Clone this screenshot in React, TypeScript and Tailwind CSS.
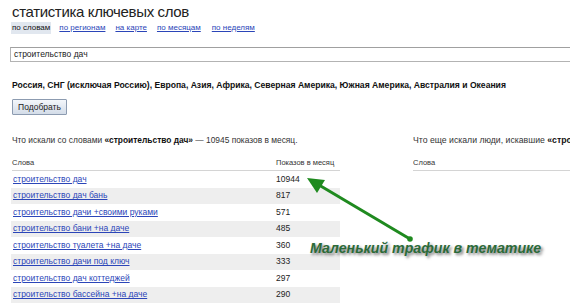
import React from "react";

const rows: [string, string][] = [
  ["строительство дач", "10944"],
  ["строительство дач бань", "817"],
  ["строительство дачи +своими руками", "571"],
  ["строительство бани +на даче", "485"],
  ["строительство туалета +на даче", "360"],
  ["строительство дачи под ключ", "333"],
  ["строительство дач коттеджей", "297"],
  ["строительство бассейна +на даче", "290"],
];

export default function App() {
  return (
    <div className="relative w-[570px] h-[305px] overflow-hidden bg-white text-[#333] font-['Liberation_Sans',Arial,sans-serif]">
      <div className="pl-[12px]">
        <div className="mt-[2px] h-[20px] leading-[20px] text-[15px] tracking-[-0.35px] text-[#222]">статистика ключевых слов</div>
        <div className="flex items-center h-[12px] text-[8px] leading-[12px]">
          <span className="-ml-[1px] px-[1px] bg-[#e1e7ef] text-[#111]">по словам</span>
          <a className="ml-[8px] text-[#2b45b8] underline">по регионам</a>
          <a className="ml-[10px] text-[#2b45b8] underline">на карте</a>
          <a className="ml-[10px] text-[#2b45b8] underline">по месяцам</a>
          <a className="ml-[11px] text-[#2b45b8] underline">по неделям</a>
        </div>
        <div className="mt-[13px] -ml-[2px] w-[580px] h-[15px] border border-[#b3b3b3] border-t-[#a0a0a0] flex items-center pl-[3px] text-[8.5px] text-[#222]">
          строительство дач
        </div>
        <div className="mt-[17px] h-[12px] leading-[12px] text-[8.6px] font-bold text-[#111] whitespace-nowrap">
          Россия, СНГ (исключая Россию), Европа, Азия, Африка, Северная Америка, Южная Америка, Австралия и Океания
        </div>
        <div className="mt-[8px] w-[55px] h-[16px] border border-[#8c9bb0] rounded-[1px] bg-gradient-to-b from-[#f4f7fb] to-[#d3dce8] flex items-center justify-center text-[8.5px] text-[#222]">
          Подобрать
        </div>
        <div className="mt-[19px] flex">
          <div className="w-[329px] -ml-[1px]">
            <div className="h-[12px] leading-[12px] text-[8.4px] pl-[1px] whitespace-nowrap">
              Что искали со словами <b className="text-[#111]">«строительство дач»</b> — 10945 показов в месяц.
            </div>
            <div className="mt-[10px] h-[15px] border-b border-[#d4d4d4] flex items-center text-[7.5px] text-[#333] ml-[1px]">
              <span className="w-[264px]">Слова</span>
              <span>Показов в месяц</span>
            </div>
            {rows.map(([w, n], i) => (
              <div
                key={w}
                className={`h-[16.5px] flex items-center text-[8.5px] ${i % 2 === 1 ? "bg-[#eeeeee]" : ""}`}
              >
                <a className="w-[265px] pl-[2px] text-[#2b45b8] underline">{w}</a>
                <span className="text-[#222]">{n}</span>
              </div>
            ))}
          </div>
          <div className="ml-[73px] flex-1 overflow-hidden">
            <div className="h-[12px] leading-[12px] text-[8.7px] whitespace-nowrap">
              Что еще искали люди, искавшие <b className="text-[#111]">«строительство дач»</b>
            </div>
            <div className="mt-[10px] h-[15px] border-b border-[#d4d4d4] flex items-center text-[7.5px] w-[200px]">
              Слова
            </div>
          </div>
        </div>
      </div>

      <svg className="absolute left-0 top-0" width="570" height="305" viewBox="0 0 570 305">
        <line x1="410" y1="239" x2="319" y2="185" stroke="#1f8a1f" strokeWidth="3" />
        <polygon points="307,178 317,193 325,180" fill="#1f8a1f" />
        <circle cx="410" cy="239" r="2.8" fill="#1f8a1f" />
      </svg>
      <div className="absolute left-[310px] top-[239px] text-[14.2px] leading-[18px] font-bold italic text-[#2b6a38] whitespace-nowrap [text-shadow:2px_2px_3px_rgba(0,0,0,0.55)]">
        Маленький трафик в тематике
      </div>
    </div>
  );
}
